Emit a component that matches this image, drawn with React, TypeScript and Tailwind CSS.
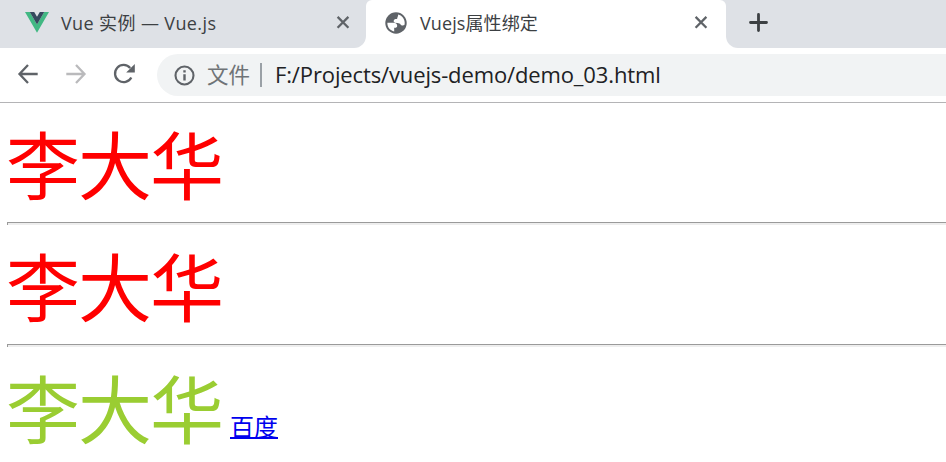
import React from 'react';

const ui = 'font-["Open_Sans","Noto_Sans_CJK_SC",sans-serif]';
const cjk = 'font-["Noto_Sans_CJK_SC",sans-serif]';

function Close() {
  return (
    <svg width="14" height="14" viewBox="0 0 14 14" className="shrink-0" fill="none" stroke="#5f6368" strokeWidth="2.3">
      <path d="M1.6 .9 12.4 11.7M12.4 .9 1.6 11.7" />
    </svg>
  );
}

function VueLogo() {
  return (
    <svg width="24" height="21" viewBox="0 0 24 21" className="shrink-0">
      <path d="M0 0H4.8L12 12.4 19.2 0H24L12 20.7Z" fill="#41b883" />
      <path d="M4.8 0H9.2L12 4.8 14.8 0H19.2L12 12.4Z" fill="#35495e" />
    </svg>
  );
}

function Globe() {
  return (
    <svg width="22" height="22" viewBox="0 0 22 22" className="shrink-0">
      <circle cx="11" cy="11" r="10.700" fill="#5f6368" />
      <path d="M2.400 10.800H8.500c2.200 0 3.700 1.100 3.700 2.900 0 1.300-.9 2.100-2.200 2.100H9.200v3.600C5.200 18.700 2.100 15.200 2.400 10.800z" fill="#fff" />
      <path d="M13 2.500c3.900.9 6.700 4.300 6.700 8.300 0 .9-.1 1.600-.3 2.300-.8.500-1.700.6-2.600.3-1.200-.4-1.300-1.600-2.500-1.900-2-.5-5.100-.2-5.600-2-.3-1.200.6-2.300 1.900-2.600h1.200c.9-.3.4-1.600 1-2.300.4-.5.400-1.200.2-2.100z" fill="#fff" />
    </svg>
  );
}

function TabStrip() {
  return (
    <div className="flex h-12 bg-white">
      <div className="flex h-12 w-[366px] items-center rounded-br-[12px] bg-[#dee1e6] pr-4 pb-[3px] pl-[25px]">
        <VueLogo />
        <span className={`${ui} ml-3 flex-1 whitespace-nowrap pt-px text-[18px] tracking-[0.38px] text-[#3c4043]`}>Vue 实例 — Vue.js</span>
        <Close />
      </div>
      <div className="w-[360px] bg-[linear-gradient(#dee1e6_0_8px,#fff_8px)]">
        <div className="flex h-12 items-center rounded-t-[6px] bg-white pr-[18px] pb-[3px] pl-[19px]">
          <Globe />
          <span className={`${ui} ml-[13px] flex-1 whitespace-nowrap pt-px text-[18px] tracking-[0.1px] text-[#3c4043]`}>Vuejs属性绑定</span>
          <Close />
        </div>
      </div>
      <div className="flex flex-1 items-center rounded-bl-[12px] bg-[#dee1e6] pb-1 pl-[23px]">
        <svg width="19" height="19" viewBox="0 0 19 19" fill="none" stroke="#3c4043" strokeWidth="2.8" strokeLinecap="round">
          <path d="M9.500 1.500v16M1.500 9.500h16" />
        </svg>
      </div>
    </div>
  );
}

function Toolbar() {
  return (
    <div className="flex h-[55px] items-start border-b border-[#b4b4b6] bg-white pt-[6px]">
      <div className="flex h-[42px] w-[157px] items-center pb-[2px] pl-[17px]">
        <svg width="22" height="22" viewBox="0 0 22 22" fill="none" stroke="#5f6368" strokeWidth="2.3">
          <path d="M20.700 11H2.500M11 2 2.500 11 11 20" />
        </svg>
        <svg width="22" height="22" viewBox="0 0 22 22" fill="none" stroke="#bababc" strokeWidth="2.300" className="ml-[26px]">
          <path d="M1.300 11h18.200M11 2l8.500 9-8.500 9" />
        </svg>
        <svg width="22" height="22" viewBox="0 0 22 22" className="ml-[26px]">
          <path d="M18.300 14.500A8.600 8.600 0 1 1 17.200 5" fill="none" stroke="#5f6368" strokeWidth="2.300" />
          <path d="M21.800 1v8.600h-8.600Z" fill="#5f6368" />
        </svg>
      </div>
      <div className="flex h-[42px] flex-1 items-center rounded-l-full bg-[#f1f3f4] pl-[17px]">
        <svg width="21" height="21" viewBox="0 0 21 21" fill="none" stroke="#5f6368" strokeWidth="2.100">
          <circle cx="10.500" cy="10.500" r="9" />
          <path d="M10.500 9.300v6.200M10.500 5.300v2.300" strokeWidth="2.400" />
        </svg>
        <span className={`${cjk} ml-3 w-[53px] whitespace-nowrap pb-[3px] text-[21.500px] leading-[30px] text-[#6f7377]`}>文件</span>
        <div className="h-6 w-[2px] bg-[#9aa0a6]" />
        <span className={`${ui} ml-[13px] whitespace-nowrap pb-[2px] text-[22px] leading-[30px] tracking-[-0.13px] text-[#202124]`}>F:/Projects/vuejs-demo/demo_03.html</span>
      </div>
    </div>
  );
}

function Rule() {
  return <div className="h-[3px] border-t border-l border-t-[#9a9a9a] border-l-[#9a9a9a] bg-[#eeeeee]" />;
}

export default function App() {
  return (
    <div className="h-[462px] w-[946px] overflow-hidden bg-white">
      <TabStrip />
      <Toolbar />
      <div className={`${cjk} pl-[7px]`}>
        <div className="-indent-px h-[119px] pt-[9px] text-[74px] leading-[100px] tracking-[-2px] text-[#ff0000]">李大华</div>
        <Rule />
        <div className="-indent-px h-[119px] pt-[9px] text-[74px] leading-[100px] tracking-[-2px] text-[#ff0000]">李大华</div>
        <Rule />
        <div className="flex items-baseline gap-[7px] pt-[9px]">
          <span className="-indent-px text-[74px] leading-[100px] tracking-[-2px] text-[#9acd32]">李大华</span>
          <a href="#" className="relative -top-[2px] ml-px text-[24px] text-[#0000ee] underline decoration-2 underline-offset-1">百度</a>
        </div>
      </div>
    </div>
  );
}
